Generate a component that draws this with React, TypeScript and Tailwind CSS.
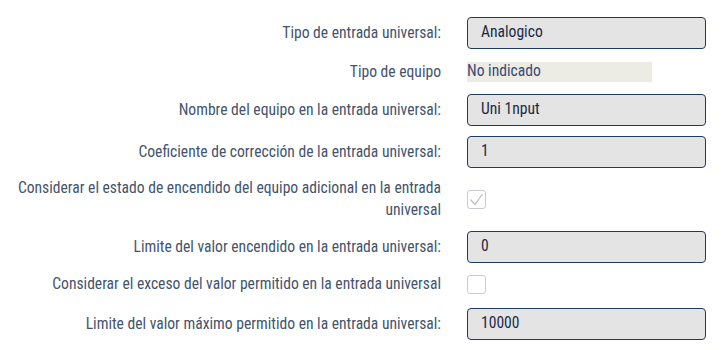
import React from "react";

const labelCls =
  "w-[441px] shrink-0 text-right text-[#44546c] leading-[22px]";

function Field({ value }: { value: string }) {
  return (
    <div className="ml-[26px] flex h-[32px] w-[239px] items-center rounded-[4px] border border-[#1f3a60] bg-[#e4e4e4] pl-[13px] text-[#1c2a44]">
      {value}
    </div>
  );
}

function Check({ checked }: { checked?: boolean }) {
  return (
    <div className="ml-[26px] flex h-[19px] w-[19px] items-center justify-center rounded-[3px] border border-[#c8ccd2] bg-white">
      {checked && (
        <svg width="15" height="15" viewBox="0 0 15 15" fill="none">
          <path d="M1.5 7.5 L6 12.5 L13.5 2" stroke="#b9bec5" strokeWidth="1.2" />
        </svg>
      )}
    </div>
  );
}

export default function App() {
  return (
    <div
      className="flex w-[723px] flex-col bg-white pt-[17px] text-[15.6px]"
      style={{ fontFamily: "'Roboto Condensed', Roboto, sans-serif" }}
    >
      <div className="flex h-[32px] items-center">
        <span className={labelCls}>Tipo de entrada universal:</span>
        <Field value="Analogico" />
      </div>

      <div className="mt-[13px] flex h-[20px] items-center">
        <span className={labelCls}>Tipo de equipo</span>
        <div className="ml-[26px] flex h-[20px] w-[185px] items-center bg-[#ecebe4] text-[#3a4a78]">
          No indicado
        </div>
      </div>

      <div className="mt-[12px] flex h-[32px] items-center">
        <span className={labelCls}>Nombre del equipo en la entrada universal:</span>
        <Field value="Uni 1nput" />
      </div>

      <div className="mt-[10px] flex h-[32px] items-center">
        <span className={labelCls}>Coeficiente de corrección de la entrada universal:</span>
        <Field value="1" />
      </div>

      <div className="mt-[9px] flex h-[44px] items-center">
        <span className={labelCls}>
          Considerar el estado de encendido del equipo adicional en la entrada universal
        </span>
        <Check checked />
      </div>

      <div className="mt-[10px] flex h-[32px] items-center">
        <span className={labelCls}>Limite del valor encendido en la entrada universal:</span>
        <Field value="0" />
      </div>

      <div className="mt-[11px] flex h-[20px] items-center">
        <span className={labelCls}>Considerar el exceso del valor permitido en la entrada universal</span>
        <Check />
      </div>

      <div className="mt-[14px] flex h-[32px] items-center">
        <span className={labelCls}>Limite del valor máximo permitido en la entrada universal:</span>
        <Field value="10000" />
      </div>
    </div>
  );
}
